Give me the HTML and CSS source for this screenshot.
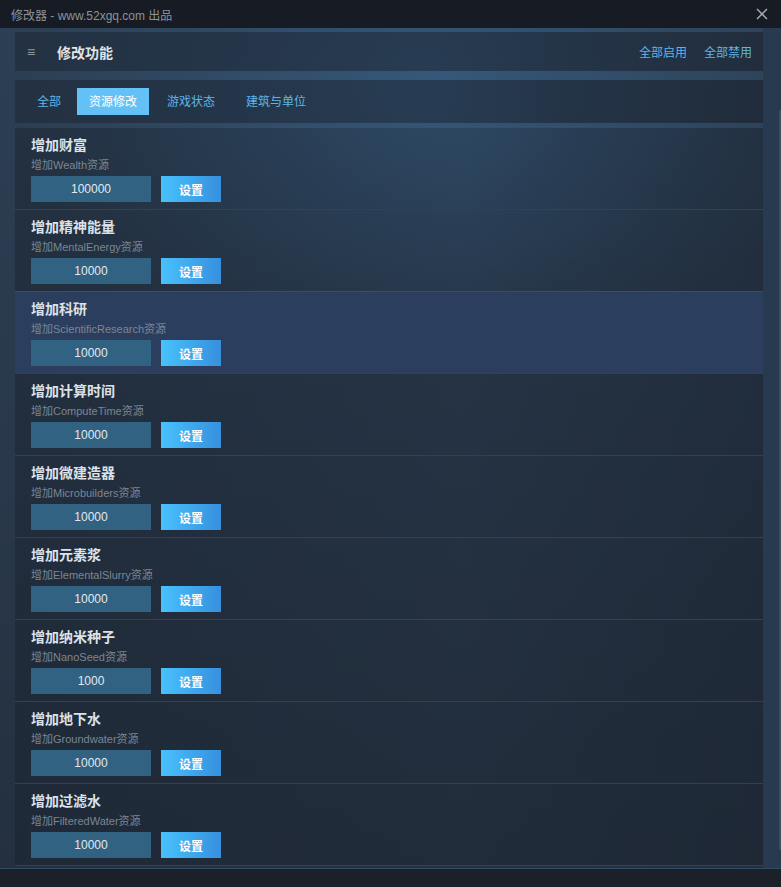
FILE: index.html
```html
<!DOCTYPE html>
<html lang="zh-CN">
<head>
  <meta charset="UTF-8">
  <title>修改器 - www.52xgq.com 出品</title>
  <link rel="stylesheet" href="styles.css">
</head>
<body>
  <div class="titlebar">
    <span class="titleText">修改器 - www.52xgq.com 出品</span>
    <svg class="closeBtn" width="12" height="12" viewBox="0 0 12 12">
      <path d="M1 1 L11 11 M11 1 L1 11" stroke="#aeb4bb" stroke-width="1.3" fill="none"/>
    </svg>
  </div>

  <div class="main">
    <div class="panel">
      <!-- header card -->
      <div class="headerCard">
        <div class="headerLeft">
          <span class="menuIcon">≡</span>
          <span class="headerTitle">修改功能</span>
        </div>
        <div class="headerLinks">
          <a class="headerLink">全部启用</a>
          <a class="headerLink">全部禁用</a>
        </div>
      </div>

      <!-- tabs -->
      <div class="tabsCard">
        <span class="tab">全部</span>
        <span class="tab active">资源修改</span>
        <span class="tab">游戏状态</span>
        <span class="tab">建筑与单位</span>
      </div>

      <div class="list">
        <div class="row">
          <div class="rowTitle">增加财富</div>
          <div class="rowDesc">增加Wealth资源</div>
          <div class="rowControls"><input class="valueInput" value="100000"><button class="setBtn">设置</button></div>
        </div>
        <div class="row">
          <div class="rowTitle">增加精神能量</div>
          <div class="rowDesc">增加MentalEnergy资源</div>
          <div class="rowControls"><input class="valueInput" value="10000"><button class="setBtn">设置</button></div>
        </div>
        <div class="row hover">
          <div class="rowTitle">增加科研</div>
          <div class="rowDesc">增加ScientificResearch资源</div>
          <div class="rowControls"><input class="valueInput" value="10000"><button class="setBtn">设置</button></div>
        </div>
        <div class="row">
          <div class="rowTitle">增加计算时间</div>
          <div class="rowDesc">增加ComputeTime资源</div>
          <div class="rowControls"><input class="valueInput" value="10000"><button class="setBtn">设置</button></div>
        </div>
        <div class="row">
          <div class="rowTitle">增加微建造器</div>
          <div class="rowDesc">增加Microbuilders资源</div>
          <div class="rowControls"><input class="valueInput" value="10000"><button class="setBtn">设置</button></div>
        </div>
        <div class="row">
          <div class="rowTitle">增加元素浆</div>
          <div class="rowDesc">增加ElementalSlurry资源</div>
          <div class="rowControls"><input class="valueInput" value="10000"><button class="setBtn">设置</button></div>
        </div>
        <div class="row">
          <div class="rowTitle">增加纳米种子</div>
          <div class="rowDesc">增加NanoSeed资源</div>
          <div class="rowControls"><input class="valueInput" value="1000"><button class="setBtn">设置</button></div>
        </div>
        <div class="row">
          <div class="rowTitle">增加地下水</div>
          <div class="rowDesc">增加Groundwater资源</div>
          <div class="rowControls"><input class="valueInput" value="10000"><button class="setBtn">设置</button></div>
        </div>
        <div class="row">
          <div class="rowTitle">增加过滤水</div>
          <div class="rowDesc">增加FilteredWater资源</div>
          <div class="rowControls"><input class="valueInput" value="10000"><button class="setBtn">设置</button></div>
        </div>
      </div>
    </div>
    <div class="scrollTrack"><div class="scrollThumb"></div></div>
  </div>

  <div class="statusbar"></div>
</body>
</html>
```

FILE: styles.css
```css
html, body {
  margin: 0;
  padding: 0;
  height: 887px;
  overflow: hidden;
  background-color: #1b2029;
  font-family: "Liberation Sans", "Noto Sans CJK SC", sans-serif;
}

.titlebar {
  height: 28px;
  background-color: #171c24;
  display: flex;
  align-items: center;
  justify-content: space-between;
  padding: 0 13px 0 11px;
}
.titleText {
  color: #8d9299;
  font-size: 12px;
}
.closeBtn {
  display: block;
}

.main {
  height: 840px;
  display: flex;
  background: linear-gradient(to bottom, #2c3f53 0%, #2a3a4d 40%, #24303f 100%);
  overflow: hidden;
}
.panel {
  margin-left: 15px;
  width: 748px;
  padding-top: 4px;
  display: flex;
  flex-direction: column;
  background: radial-gradient(ellipse 420px 260px at 420px 60px, #35587a 0%, rgba(53, 88, 122, 0) 100%);
}

.headerCard {
  height: 39px;
  display: flex;
  align-items: center;
  justify-content: space-between;
  padding: 0 11px 0 12px;
  background: linear-gradient(to right, rgba(32, 45, 62, 0.75), rgba(28, 38, 52, 0.55) 55%, rgba(30, 40, 54, 0.8));
}
.headerLeft {
  display: flex;
  align-items: center;
}
.menuIcon {
  color: #8e969f;
  font-size: 14px;
  width: 30px;
}
.headerTitle {
  color: #dfe4e8;
  font-size: 14px;
  font-weight: bold;
}
.headerLinks {
  display: flex;
  gap: 17px;
}
.headerLink {
  color: #5fb6e6;
  font-size: 12px;
}

.tabsCard {
  margin-top: 9px;
  height: 43px;
  display: flex;
  align-items: center;
  padding-left: 10px;
  background: linear-gradient(to right, rgba(33, 46, 63, 0.8), rgba(30, 42, 58, 0.6) 55%, rgba(30, 40, 54, 0.85));
}
.tab {
  color: #5fb6e6;
  font-size: 12px;
  height: 27px;
  line-height: 29px;
  overflow: hidden;
  padding: 0 12px;
  margin-right: 6px;
}
.tab:first-child {
  margin-right: 4px;
}
.tab:nth-child(3) {
  margin-right: 7px;
}
.tab.active {
  background-color: #64c1f6;
  color: #ffffff;
}

.list {
  margin-top: 5px;
  display: flex;
  flex-direction: column;
}
.row {
  height: 82px;
  flex-shrink: 0;
  padding: 0 16px;
  box-sizing: border-box;
  border-bottom: 1px solid #2b4459;
  background: linear-gradient(to right, rgba(24, 32, 44, 0.45), rgba(24, 32, 44, 0.25) 60%, rgba(24, 32, 44, 0.5));
}
.row.hover {
  background: #2b3e5e;
  border-top: 1px solid #30506c;
  margin-top: -1px;
  height: 83px;
}
.rowTitle {
  padding-top: 8px;
  color: #dce2e7;
  font-size: 14px;
  font-weight: bold;
  line-height: 18px;
}
.rowDesc {
  margin-top: 4px;
  color: #7c8692;
  font-size: 11px;
  line-height: 14px;
}
.rowControls {
  margin-top: 4px;
  display: flex;
  gap: 10px;
}
.valueInput {
  width: 120px;
  height: 26px;
  box-sizing: border-box;
  border: none;
  outline: none;
  background-color: #316282;
  color: #e3e9ee;
  font-family: "Liberation Sans", sans-serif;
  font-size: 12px;
  text-align: center;
  padding: 0;
}
.setBtn {
  width: 60px;
  height: 26px;
  border: none;
  padding: 0;
  background: linear-gradient(to right, #48c1fc, #3790de);
  color: #ffffff;
  font-family: "Noto Sans CJK SC", sans-serif;
  font-size: 12px;
  font-weight: bold;
}

.scrollTrack {
  flex: 1;
  position: relative;
  background-color: #283a4f;
}
.scrollThumb {
  position: absolute;
  right: 0;
  top: 82px;
  width: 2px;
  height: 740px;
  background-color: #3b4d62;
}

.statusbar {
  height: 18px;
  background-color: #1b2029;
  border-top: 1px solid #2f4d63;
}
```
